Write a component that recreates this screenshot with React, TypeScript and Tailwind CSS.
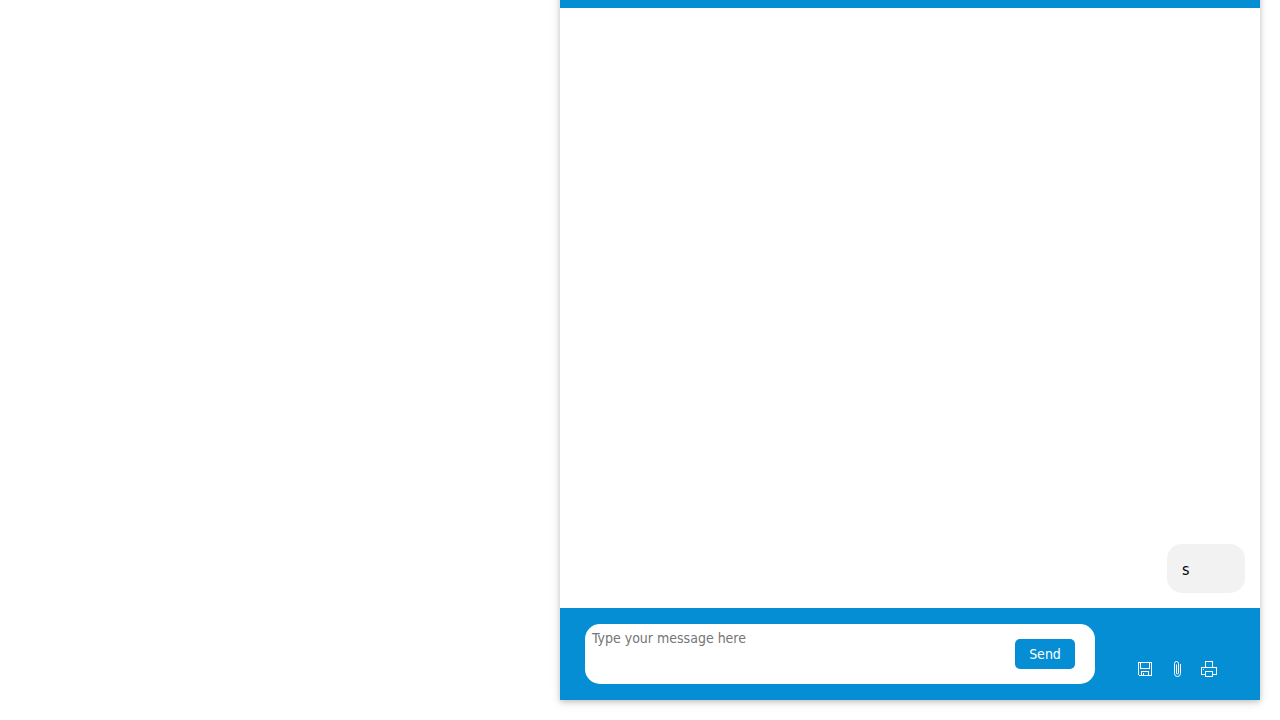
import React from "react";

function SaveIcon() {
  return (
    <svg width="16" height="16" viewBox="0 0 16 16" fill="none" stroke="white" shapeRendering="crispEdges" aria-hidden="true">
      <path d="M1.5 1.5h13v13h-12l-1-1zM3.5 1.5v6h9v-6M4.5 14.5v-4h7v4M6.5 12v2.5" />
    </svg>
  );
}

function ClipIcon() {
  return (
    <svg width="16" height="16" viewBox="0 0 16 16" fill="none" stroke="white" aria-hidden="true">
      <path d="M11.5 3v9.5a3 3 0 0 1-6 0v-10a2 2 0 0 1 4 0v9.5a1 1 0 0 1-2 0v-8.5" />
    </svg>
  );
}

function PrintIcon() {
  return (
    <svg width="16" height="16" viewBox="0 0 16 16" fill="none" stroke="white" shapeRendering="crispEdges" aria-hidden="true">
      <path d="M4.5 6.5v-6h7v6M4.5 13.5h-4v-7h15v7h-4M4.5 10.5h7v5h-7zM2 8.5h1" />
    </svg>
  );
}

export default function App() {
  return (
    <div className="flex h-screen flex-col items-end justify-end overflow-hidden bg-white pr-5 pb-5 font-['DejaVu_Sans_Condensed','DejaVu_Sans',sans-serif]">
      <section className="w-full max-w-[700px] shrink-0 bg-white shadow-[0_2px_5px_rgba(0,0,0,0.16),0_2px_10px_rgba(0,0,0,0.12)]">
        <header className="h-24 bg-[#058ed4]" />
        <main className="flex h-[600px] flex-col items-end justify-end p-[15px]">
          <p className="min-w-[78px] rounded-[15px] bg-[#f2f2f2] px-[15px] pt-[15px] pb-3 text-base leading-[22px] text-black">s</p>
        </main>
        <form className="flex gap-[42px] bg-[#058ed4] py-4 pr-10 pl-[25px]" onSubmit={(e) => e.preventDefault()}>
          <div className="flex h-[60px] min-w-0 flex-1 items-center rounded-[15px] bg-white pr-5">
            <textarea
              aria-label="Message"
              placeholder="Type your message here"
              className="h-full min-w-0 flex-1 resize-none bg-transparent px-[7px] py-1 text-sm text-black outline-none placeholder:text-[#757575]"
            />
            <button type="submit" className="h-[30px] w-[60px] rounded-[5px] bg-[#058ed4] text-sm text-white">Send</button>
          </div>
          <div className="flex items-end gap-4 self-end pr-[3px] pb-[7px]">
            <button type="button" aria-label="Save conversation"><SaveIcon /></button>
            <button type="button" aria-label="Attach file"><ClipIcon /></button>
            <button type="button" aria-label="Print conversation"><PrintIcon /></button>
          </div>
        </form>
      </section>
    </div>
  );
}
